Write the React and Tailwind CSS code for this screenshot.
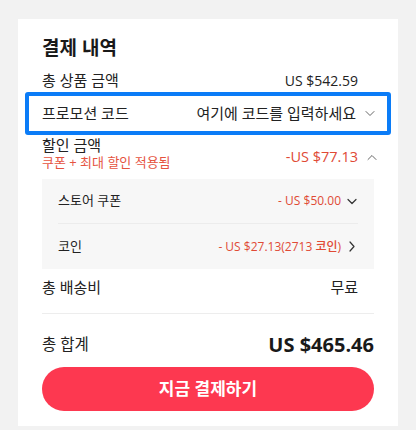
import React from "react";

const Chevron = ({ dir = "down", className = "", stroke = "#555", sw = 1.2 }) => {
  const paths = {
    down: "M1 1.5 L5 5.5 L9 1.5",
    up: "M1 5.5 L5 1.5 L9 5.5",
  };
  return (
    <svg width="10" height="7" viewBox="0 0 10 7" className={className} fill="none">
      <path d={paths[dir]} stroke={stroke} strokeWidth={sw} strokeLinecap="round" strokeLinejoin="round" />
    </svg>
  );
};

export default function App() {
  return (
    <div
      className="min-h-[430px] w-[416px] bg-[#f2f2f2] pt-[19px] text-[#222]"
      style={{ fontFamily: '"Open Sans", "Noto Sans CJK KR", sans-serif' }}
    >
      <div className="mx-[18px] bg-white px-[24px] pt-[15px] pb-[15px]">
        {/* Title */}
        <div className="flex h-[28px] items-center text-[19px] font-bold leading-none text-[#191919]">
          결제 내역
        </div>
        {/* Total product amount */}
        <div className="mt-[6px] flex h-[24px] items-center justify-between pr-[16px] text-[14px]">
          <span className="text-[15px]">총 상품 금액</span>
          <span>US $542.59</span>
        </div>
        {/* Promo code */}
        <div className="-mx-[17px] flex h-[43px] items-center justify-between rounded-[3px] border-4 border-[#0b7cf7] pl-[13px] pr-[12px] text-[15px]">
          <span>프로모션 코드</span>
          <div className="flex items-center">
            <span>여기에 코드를 입력하세요</span>
            <Chevron dir="down" className="ml-[9px]" stroke="#666" sw={1} />
          </div>
        </div>
        {/* Discount */}
        <div className="flex items-center justify-between pt-[1px]">
          <div className="flex flex-col">
            <span className="h-[18px] text-[15px] leading-[18px]">할인 금액</span>
            <span className="h-[16px] text-[13px] leading-[16px] text-[#e5533f]">쿠폰 + 최대 할인 적용됨</span>
          </div>
          <div className="-mr-[3px] mt-[8px] flex items-center">
            <span className="text-[14.5px] text-[#e04a35]">-US $77.13</span>
            <Chevron dir="up" className="ml-[9px]" stroke="#666" sw={1} />
          </div>
        </div>
        {/* Gray box */}
        <div className="mt-[9px] bg-[#f7f7f7] px-[16px]">
          <div className="flex h-[45px] items-center justify-between border-b border-[#ececec] pr-[1px] text-[13px]">
            <span>스토어 쿠폰</span>
            <div className="flex items-center">
              <span className="text-[12px] font-medium text-[#e04a35]">- US $50.00</span>
              <Chevron dir="down" className="ml-[6px]" stroke="#333" sw={1.2} />
            </div>
          </div>
          <div className="flex h-[45px] items-center justify-between pr-[3px] text-[13px]">
            <span>코인</span>
            <div className="flex items-center">
              <span className="text-[12px] font-medium text-[#e04a35]">- US $27.13(2713 코인)</span>
              <svg width="6" height="11" viewBox="0 0 6 11" fill="none" className="ml-[8px]">
                <path d="M1 1 L5 5.5 L1 10" stroke="#333" strokeWidth="1.2" strokeLinecap="round" strokeLinejoin="round" />
              </svg>
            </div>
          </div>
        </div>
        {/* Shipping */}
        <div className="flex h-[36px] items-center justify-between pr-[16px] text-[15px]">
          <span>총 배송비</span>
          <span>무료</span>
        </div>
        <div className="mt-[8px] h-px bg-[#ededed]" />
        {/* Total */}
        <div className="mt-[12px] flex h-[38px] items-center justify-between">
          <span className="text-[15.5px]">총 합계</span>
          <span className="text-[20px] font-bold text-[#191919]">US $465.46</span>
        </div>
        <button className="mt-[3px] flex h-[44px] w-full items-center justify-center rounded-full bg-[#fd3850] text-[17px] font-bold text-white">
          지금 결제하기
        </button>
      </div>
    </div>
  );
}
